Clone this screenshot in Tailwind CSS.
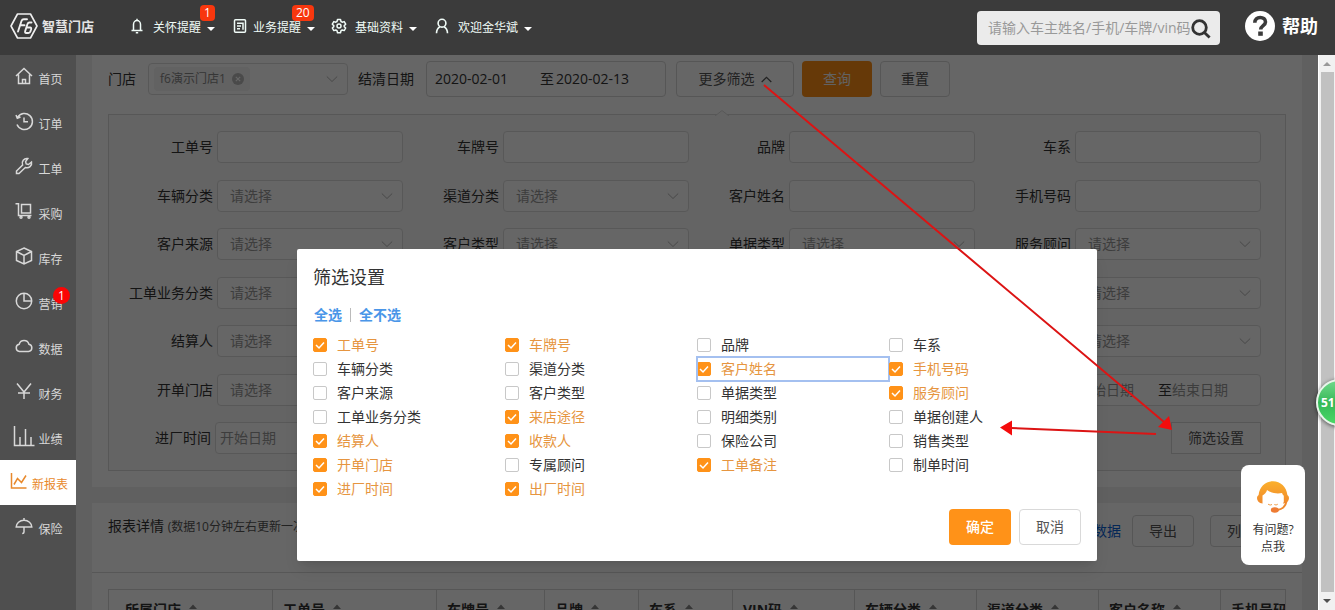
<!DOCTYPE html>
<html lang="zh-CN">
<head>
<meta charset="utf-8">
<title>智慧门店</title>
<script src="https://cdn.jsdelivr.net/npm/@tailwindcss/browser@4"></script>
</head>
<body class="relative h-screen overflow-hidden flex flex-col bg-white text-[14px] leading-5 text-[#333] font-['Open_Sans','Noto_Sans_CJK_SC',sans-serif]">

<header class="h-[55px] shrink-0 bg-[#3b3b3b] text-white flex items-center pl-[10px] pr-[17px]">
  <a href="#" class="flex items-center gap-1 mb-1 w-[119px] text-[#f0f0f0]" aria-label="智慧门店">
    <svg class="w-7 h-[26px] shrink-0" viewBox="0 0 28 26" fill="none" stroke="currentColor" stroke-linejoin="round" stroke-linecap="round"><path stroke-width="1.6" d="M7.5 1h13L27 13l-6.500 12h-13L1 13z"/><path stroke-width="1.900" d="M8 18.500 11.500 8q.6-1.800 2.400-1.800H17M10.200 12.200h4.300M21.500 9.500h-2q-1.500 0-2 1.500l-2.300 7q-.5 2 1 2h2.200q1.500 0 2-1.500l.7-2.200q.5-1.800-1-1.800h-3.400"/></svg>
    <span class="text-[13px] font-bold whitespace-nowrap text-[#e4e4e4]">智慧门店</span>
  </a>
  <nav class="flex items-center text-[12px] text-[#f0fbf7] whitespace-nowrap">
    <a href="#" class="relative flex items-center w-[104px]">
      <svg class="w-4 h-4 mr-2 mb-1" viewBox="0 0 16 16" fill="none" stroke="currentColor" stroke-width="1.500"><path d="M4.500 12.500V6.500a3.500 4 0 0 1 7 0v6M2.500 12.500h11M8 .8v1.700M6.800 14.800h2.400"/></svg>
      <span>关怀提醒</span>
      <span class="ml-1.5 mt-0.5 border-x-4 border-t-4 border-x-transparent border-t-white"></span>
      <span class="absolute left-[71px] -top-[13px] h-4 px-1 rounded-sm bg-[#f8370e] text-[12px] leading-4 text-white">1</span>
    </a>
    <a href="#" class="relative flex items-center w-[98px]">
      <svg class="w-[14px] h-[14px] mr-[6px] mb-1" viewBox="0 0 14 14" fill="none" stroke="currentColor" stroke-width="1.500"><rect x="1.500" y=".8" width="11" height="12.400" rx="1"/><path d="M4 4.300h6v6.500M4 7h4M4 9.700h3"/></svg>
      <span>业务提醒</span>
      <span class="ml-1.5 mt-0.5 border-x-4 border-t-4 border-x-transparent border-t-white"></span>
      <span class="absolute left-[59px] -top-[13px] h-4 px-1 rounded-sm bg-[#f8370e] text-[12px] leading-4 text-white">20</span>
    </a>
    <a href="#" class="flex items-center w-[103px]">
      <svg class="w-4 h-4 mr-2 mb-1" viewBox="0 0 16 16" fill="none" stroke="currentColor" stroke-width="1.500" stroke-linejoin="round"><path d="M6.500 1.500h3l.5 2 1.200.7 2-.6 1.500 2.600-1.500 1.400v1l1.500 1.400-1.500 2.600-2-.6-1.200.7-.5 2h-3l-.5-2-1.200-.7-2 .6L1.300 10l1.500-1.400v-1L1.300 6.200l1.500-2.600 2 .6L6 3.500z"/><circle cx="8" cy="8.100" r="2"/></svg>
      <span>基础资料</span>
      <span class="ml-1.5 mt-0.5 border-x-4 border-t-4 border-x-transparent border-t-white"></span>
    </a>
    <a href="#" class="flex items-center">
      <svg class="w-4 h-4 mr-2 mb-1" viewBox="0 0 16 16" fill="none" stroke="currentColor" stroke-width="1.600"><circle cx="8" cy="5.200" r="3.900"/><path d="M2.500 15.200c0-3.200 1.400-5.300 3.500-6.500M13.500 15.200c0-3.200-1.400-5.300-3.500-6.500"/></svg>
      <span>欢迎金华斌</span>
      <span class="ml-1.5 mt-0.5 border-x-4 border-t-4 border-x-transparent border-t-white"></span>
    </a>
  </nav>
  <div class="relative ml-auto w-[243px]">
    <input type="text" aria-label="搜索" placeholder="请输入车主姓名/手机/车牌/vin码" class="block w-full h-[34px] rounded bg-[#ebebeb] pl-[11px] text-[14px] text-[#333] placeholder:text-[#999]">
    <button type="button" aria-label="搜索" class="absolute right-[9px] top-2 w-5 h-5 text-[#333]"><svg viewBox="0 0 20 20" fill="none" stroke="currentColor" stroke-width="2.800"><circle cx="8.500" cy="8.500" r="6.800"/><path d="m13.400 13.400 5.200 5.200"/></svg></button>
  </div>
  <a href="#" class="ml-[25px] flex items-center gap-[7px] mb-1 text-[18px] font-bold whitespace-nowrap">
    <svg class="w-[30px] h-[30px]" viewBox="0 0 30 30"><circle cx="15" cy="15" r="15" fill="#fff"/><path d="M9.800 11.800c0-3.800 2.300-5.300 5.400-5.300s5.300 1.700 5.300 4.500c0 3.500-4.800 3.700-4.800 7.400" fill="none" stroke="#3b3b3b" stroke-width="3.600"/><rect x="13.200" y="20.500" width="4.600" height="4.300" fill="#3b3b3b"/></svg>
    <span>帮助</span>
  </a>
</header>

<div class="flex-1 min-h-0 flex">
  <nav class="w-[76px] shrink-0 bg-[#4f4f4f] text-[12px] text-[#d8d8d8] whitespace-nowrap" id="side"></nav>

  <main class="relative flex-1 min-w-0 overflow-hidden bg-[#f0f0f0] px-4">
    <section class="bg-white px-4 pt-[6px] pb-4">
      <form class="flex items-center h-9" onsubmit="return false">
        <span class="w-10 shrink-0">门店</span>
        <button type="button" aria-label="门店" class="w-[200px] h-8 border border-[#dcdcdc] rounded flex items-center justify-between pl-[5px] pr-[9px]">
          <span class="flex items-center gap-1.5 h-6 px-1.5 rounded bg-[#f4f4f4] text-[12px] text-[#888]">f6演示门店1
            <svg class="w-3 h-3" viewBox="0 0 12 12"><circle cx="6" cy="6" r="6" fill="#b8b8b8"/><path d="m3.800 3.800 4.400 4.400m0-4.400L3.800 8.200" stroke="#fff" stroke-width="1.200"/></svg></span>
          <svg class="w-3 h-3" viewBox="0 0 12 12" fill="none" stroke="#b4b4b4"><path d="m.8 3.500 5.200 5 5.200-5"/></svg>
        </button>
        <span class="ml-[10px] w-[68px] shrink-0">结清日期</span>
        <div class="w-[240px] h-9 border border-[#d6d6d6] rounded flex items-center pl-2">
          <input type="text" aria-label="开始" value="2020-02-01" class="w-[105px] min-w-0"><span>至</span><input type="text" aria-label="结束" value="2020-02-13" class="w-[100px] min-w-0 pl-[2px]">
        </div>
        <button type="button" class="ml-[10px] w-[118px] h-9 border border-[#d6d6d6] rounded flex items-center justify-center gap-1.5 text-[#555]">更多筛选<svg class="w-[11px] h-[11px]" viewBox="0 0 11 11" fill="none" stroke="#555" stroke-width="1.200"><path d="m.7 8 4.800-4.700L10.300 8"/></svg></button>
        <button type="button" class="ml-2 w-[70px] h-9 rounded bg-[#ff9014] text-[#f4f4f4]">查询</button>
        <button type="button" class="ml-2 w-[70px] h-9 border border-[#d6d6d6] rounded text-[#555]">重置</button>
      </form>
      <div class="relative mt-[17px] border border-[#d9d9d9] bg-[#fafafa] pl-2 pr-6 py-4">
        <svg class="absolute left-[606px] -top-[5px] w-[14px] h-[6px]" viewBox="0 0 14 6"><path d="M0 6 7 .5 14 6" fill="#fafafa" stroke="#dcdcdc"/></svg>
        <div id="filters" class="grid grid-cols-4 content-between h-[323px]"></div>
      </div>
    </section>
    <section class="mt-4 bg-white min-h-[200px]">
      <div class="flex items-center h-[70px] px-4 pb-[14px] border-b border-[#dadada]">
        <h2 class="whitespace-nowrap mb-2">报表详情 <small class="text-[12px] text-[#555]">(数据10分钟左右更新一次)</small></h2>
        <a href="#" class="ml-auto text-[#0b62d8]">更新数据</a>
        <button type="button" class="ml-[11px] w-[62px] h-8 border border-[#d6d6d6] rounded-sm text-[#555]">导出</button>
        <button type="button" class="ml-4 w-[76px] h-8 border border-[#d6d6d6] rounded-sm text-[#555]">列设置</button>
      </div>
      <div class="mx-4 mt-4 overflow-hidden border-r border-[#d6d6d6]">
        <table class="table-fixed border-collapse w-[1235px] text-[14px]"><thead><tr id="thead"></tr></thead></table>
      </div>
    </section>

    <div class="absolute inset-0 bg-black/60 flex justify-center items-start pt-[194px]">
      <div role="dialog" aria-labelledby="dlg" class="w-[800px] max-w-full rounded-xs bg-white p-4 shadow-lg">
        <h1 id="dlg" class="text-[18px] leading-6">筛选设置</h1>
        <div class="mt-4 flex items-center h-5 pl-px text-[14px] font-bold text-[#4a96e8]">
          <a href="#">全选</a><span class="mx-2 w-px h-[14px] bg-[#bbb]"></span><a href="#">全不选</a>
        </div>
        <div id="checks" class="mt-2 grid grid-cols-4"></div>
        <div class="mt-2 flex justify-end gap-2">
          <button type="button" class="w-[62px] h-9 rounded bg-[#ff9218] text-white font-medium">确定</button>
          <button type="button" class="w-[62px] h-9 rounded border border-[#d9d9d9] text-[#555]">取消</button>
        </div>
      </div>
    </div>
    <a href="#" class="absolute right-[13px] bottom-[45px] w-16 h-[100px] rounded-lg bg-white flex flex-col items-center pt-[15px] text-[12px] leading-[17px]">
      <svg class="w-[34px] h-[34px] mb-[7px]" viewBox="0 0 34 34"><defs><linearGradient id="hair" x2="0" y2="1"><stop stop-color="#fbb02c"/><stop offset="1" stop-color="#f0892c"/></linearGradient></defs><path d="M6.500 23.500C3 23 1 20.800 1 18.200c0-1.400.6-2.400 1.600-3.200C3.600 6.500 9.500 1.200 17 1.200S30.400 6.500 31.400 15c1 .8 1.600 1.800 1.600 3.200 0 2.600-2 4.800-5.500 5.300z" fill="url(#hair)"/><path d="M6.500 15.500C8.500 14.500 10.500 12.500 11 10c4 3 10 4.200 15 3q.8 2 1.800 2.800v6c-1.500 5-5.500 8.700-10.800 8.700S7.700 27 6.500 23.500z" fill="#fff"/><path d="M30.500 21.500c-1 4.500-4 7.700-9 8.500" fill="none" stroke="#f0892c" stroke-width="1.800"/><ellipse cx="18.800" cy="30" rx="4" ry="2.700" fill="#ee7b33"/><path d="M12 24.200q2.300 1.600 4 .3M18.300 24.500q1.800 1.200 3.500-.3" fill="none" stroke="#f0a04c"/></svg>
      <span>有问题?</span><span>点我</span>
    </a>
  </main>

  <div class="w-[17px] shrink-0 bg-[#f1f1f1] flex flex-col items-center border-l border-white" aria-hidden="true">
    <span class="h-[17px] flex items-center"><span class="border-x-4 border-b-4 border-x-transparent border-b-[#999]"></span></span>
    <span class="flex-1 w-[13px] bg-[#c1c1c1]"></span>
    <span class="h-[18px] flex items-center"><span class="border-x-4 border-t-4 border-x-transparent border-t-[#505050]"></span></span>
  </div>
</div>

<button type="button" class="absolute -right-7 top-[379px] w-[47px] h-[47px] rounded-full border-2 border-[#e8f5ea] bg-linear-to-b from-[#6fd88a] via-[#35b958] to-[#4ad866] shadow-[0_1px_4px_#0009] text-left pl-[3px] text-[12px] font-bold text-white">51</button>

<svg class="absolute left-0 top-0 w-[1335px] h-[610px] pointer-events-none" viewBox="0 0 1335 610" aria-hidden="true"><g stroke="#dc1414" stroke-width="2"><path d="m764 85 400 337M1156 434 1011 428"/></g><path d="m1172 430-14-3 11-11zM1000 427.500l12-7v15z" fill="#f40c0c"/></svg>

<script>
const sideItems = [
  ['首页', '<path d="M1 9 9 1.500 17 9M3.500 7.500v9h11v-9M7.500 16.500v-4h3v4"/>'],
  ['订单', '<path d="M2.500 5.500A8 8 0 1 1 2 12.500M1 3l1.300 3.200L5.500 5M9 5.500v4.200h4"/>'],
  ['工单', '<path d="M12.800 1.500A4.700 4.700 0 0 0 7.600 8L1.500 14v2.500H4l6.300-6a4.700 4.700 0 0 0 6.200-5.500l-3 2.500-2.300-.6-.6-2.300z"/>'],
  ['采购', '<path d="M.5 1.800h3v11.700h13M6.500 2.500h9v8.500h-9z"/><circle cx="6" cy="15.300" r="1"/><circle cx="14" cy="15.300" r="1"/>'],
  ['库存', '<path d="m9 1 7.500 3.500v9L9 17l-7.500-3.500v-9zM1.500 4.500 9 8.500l7.500-4M9 8.500V17"/>'],
  ['营销', '<circle cx="9" cy="9" r="7.700"/><path d="M9 1.300V9h7.700"/>'],
  ['数据', '<path d="M4.500 14.500a3.700 3.700 0 0 1-.3-7.300 5 5 0 0 1 9.700 0 3.700 3.700 0 0 1-.4 7.300z"/>'],
  ['财务', '<path d="M2 1.500 9 10l7-8.500M9 10v7M3 11h12"/>'],
  ['业绩', '<path d="M-.5-1v19.500h20M5 18v-8M10.500 18V2M16 18v-8"/>'],
  ['新报表', '<path d="M1.500 1v15h15M4 12.500l3.500-6 4 4 4.500-7"/>'],
  ['保险', '<path d="M1.200 10a7.800 6.800 0 0 1 15.600 0zM9 1v2.200M9 10v5q0 1.500-1.800 1.500"/>']
];
document.getElementById('side').innerHTML = sideItems.map(([t, p]) => `
  <a href="#" class="${t === '新报表' ? 'relative h-[45px] flex items-center justify-center gap-1 pl-0.5 bg-white text-[#e8892c]' : 'relative h-[45px] flex items-center justify-center gap-[5px] pl-0.5'}">
    <svg class="w-[18px] h-[18px] shrink-0 mb-1 overflow-visible" viewBox="0 0 18 18" fill="none" stroke="currentColor" stroke-width="1.500">${p}</svg>
    <span class="mt-[5px]">${t}</span>
    ${t === '营销' ? '<span class="absolute right-[6px] top-[7px] w-[17px] h-[17px] rounded-full bg-[#fb0505] text-white text-[12px] leading-[17px] text-center">1</span>' : ''}
  </a>`).join('');

const filters = [
  ['工单号', 'i'], ['车牌号', 'i'], ['品牌', 'i'], ['车系', 'i'],
  ['车辆分类', 's'], ['渠道分类', 's'], ['客户姓名', 'i'], ['手机号码', 'i'],
  ['客户来源', 's'], ['客户类型', 's'], ['单据类型', 's'], ['服务顾问', 's'],
  ['工单业务分类', 's'], ['来店途径', 's'], ['明细类别', 's'], ['单据创建人', 's'],
  ['结算人', 's'], ['收款人', 's'], ['保险公司', 's'], ['销售类型', 's'],
  ['开单门店', 's'], ['专属顾问', 's'], ['工单备注', 'i'], ['制单时间', 'd'],
  ['进厂时间', 'd'], ['出厂时间', 'd'], ['', ''], ['筛选设置', 'b']
];
const control = (k, n, t) => k === 'i'
  ? `<input id="f${n}" type="text" class="flex-1 min-w-0 h-8 border border-[#dcdcdc] rounded bg-white">`
  : k === 's'
  ? `<div class="relative flex-1 min-w-0"><select id="f${n}" class="block appearance-none w-full h-8 border border-[#dcdcdc] rounded bg-white pl-3 text-[#999]"><option>请选择</option></select><svg class="absolute right-[10px] top-[10px] w-3 h-3 pointer-events-none" viewBox="0 0 12 12" fill="none" stroke="#b4b4b4"><path d="m.8 3.500 5.200 5 5.200-5"/></svg></div>`
  : `<div class="flex-1 min-w-0 h-8 border border-[#dcdcdc] rounded bg-white flex items-center pl-1"><input id="f${n}" type="text" placeholder="开始日期" class="w-20 min-w-0 placeholder:text-[#999]"><span>至</span><input type="text" aria-label="${t}结束" placeholder="结束日期" class="w-20 min-w-0 placeholder:text-[#999]"></div>`;
document.getElementById('filters').innerHTML = filters.map(([t, k], n) =>
  k === 'b' ? `<div class="flex justify-end"><button type="button" class="w-[90px] h-8 border border-[#d6d6d6] bg-white text-[#555]">${t}</button></div>`
  : !k ? '<div></div>'
  : `<div class="flex items-center gap-1"><label for="f${n}" class="${k === 'd' ? 'w-[94px] shrink-0 text-right' : 'w-24 shrink-0 text-right'}">${t}</label>${control(k, n, t)}</div>`).join('');

const on = ['工单号', '车牌号', '客户姓名', '手机号码', '服务顾问', '来店途径', '结算人', '收款人', '开单门店', '工单备注', '进厂时间', '出厂时间'];
document.getElementById('checks').innerHTML = filters.filter(([t, k]) => k && k !== 'b').map(([t]) => `
  <label class="${t === '客户姓名' ? 'flex items-center gap-[10px] h-6 has-checked:text-[#e69540] outline-2 -outline-offset-1 outline-[#a4c0f0]' : 'flex items-center gap-[10px] h-6 has-checked:text-[#e69540]'}">
    <span class="grid w-[14px] h-[14px]">
      <input type="checkbox" ${on.includes(t) ? 'checked' : ''} class="peer col-start-1 row-start-1 appearance-none w-[14px] h-[14px] border border-[#c8c8c8] rounded-xs checked:bg-[#ff9218] checked:border-[#ff9218]">
      <svg class="col-start-1 row-start-1 w-[14px] h-[14px] invisible peer-checked:visible pointer-events-none" viewBox="0 0 14 14" fill="none" stroke="#fff" stroke-width="1.500"><path d="m3 7 3 3 5-5.500"/></svg>
    </span>${t}
  </label>`).join('');

const cols = [['所属门店', 164], ['工单号', 164], ['车牌号', 108], ['品牌', 94], ['车系', 94], ['VIN码', 122], ['车辆分类', 122], ['渠道分类', 122], ['客户名称', 122], ['手机号码', 123]];
document.getElementById('thead').innerHTML = cols.map(([t, w], n) => `
  <th scope="col" style="width:${w}px" class="${n ? 'h-10 border border-[#d6d6d6] pl-[10px] text-left font-bold' : 'h-10 border border-[#d6d6d6] pl-4 text-left font-bold'}">
    <span class="flex items-center gap-2">${t}<svg class="w-2 h-3" viewBox="0 0 8 12" fill="#888"><path d="M0 5 4 .5 8 5zM0 7l4 4.500L8 7z"/></svg></span></th>`).join('');
</script>
</body>
</html>
